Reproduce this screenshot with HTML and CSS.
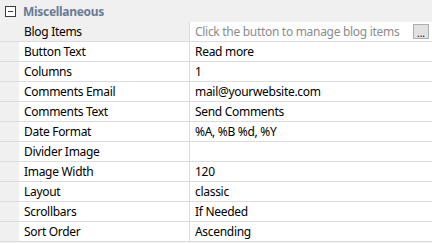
FILE: index.html
```html
<!DOCTYPE html>
<html lang="en">
  <head>
    <meta charset="UTF-8" />
    <meta name="viewport" content="width=device-width, initial-scale=1.0" />
    <title>Property Grid</title>
    <link rel="stylesheet" href="styles.css">
  </head>
  <body>
    <div class="grid">
      <!--Category header-->
      <div class="category">
        <span class="toggle"><span class="minus"></span></span>
        <span class="category-title">Miscellaneous</span>
      </div>

      <div class="row selected">
        <div class="gutter"></div>
        <div class="label">Blog Items</div>
        <div class="value">
          <span class="placeholder">Click the button to manage blog items</span>
          <span class="dots-btn">...</span>
        </div>
      </div>
      <div class="row">
        <div class="gutter"></div>
        <div class="label">Button Text</div>
        <div class="value">Read more</div>
      </div>
      <div class="row">
        <div class="gutter"></div>
        <div class="label">Columns</div>
        <div class="value">1</div>
      </div>
      <div class="row">
        <div class="gutter"></div>
        <div class="label">Comments Email</div>
        <div class="value">mail@yourwebsite.com</div>
      </div>
      <div class="row">
        <div class="gutter"></div>
        <div class="label">Comments Text</div>
        <div class="value">Send Comments</div>
      </div>
      <div class="row">
        <div class="gutter"></div>
        <div class="label">Date Format</div>
        <div class="value">%A, %B %d, %Y</div>
      </div>
      <div class="row">
        <div class="gutter"></div>
        <div class="label">Divider Image</div>
        <div class="value"></div>
      </div>
      <div class="row">
        <div class="gutter"></div>
        <div class="label">Image Width</div>
        <div class="value">120</div>
      </div>
      <div class="row">
        <div class="gutter"></div>
        <div class="label">Layout</div>
        <div class="value">classic</div>
      </div>
      <div class="row">
        <div class="gutter"></div>
        <div class="label">Scrollbars</div>
        <div class="value">If Needed</div>
      </div>
      <div class="row">
        <div class="gutter"></div>
        <div class="label">Sort Order</div>
        <div class="value">Ascending</div>
      </div>
    </div>
  </body>
</html>
```

FILE: styles.css
```css
body {
  margin: 0;
  font-family: "Noto Sans", sans-serif;
  font-size: 12px;
  letter-spacing: -0.3px;
  color: #000;
  background-color: #f0f0f0;
}
.grid {
  width: 432px;
  height: 243px;
  overflow: hidden;
  background-color: #f0f0f0;
}
/* Category header */
.category {
  display: flex;
  align-items: center;
  height: 22px;
}
.toggle {
  display: flex;
  align-items: center;
  justify-content: center;
  box-sizing: border-box;
  width: 11px;
  height: 11px;
  margin-left: 5px;
  border: 1px solid #3c3c3c;
  background-color: #fff;
}
.minus {
  width: 5px;
  height: 1px;
  background-color: #3c3c3c;
}
.category-title {
  margin-left: 7px;
  font-weight: bold;
  color: #687b96;
}
/* Property rows */
.row {
  display: flex;
  height: 20px;
  box-sizing: border-box;
  border-bottom: 1px solid #dcdcdc;
}
.gutter {
  width: 19px;
  flex-shrink: 0;
  background-color: #f0f0f0;
}
.label {
  width: 171px;
  flex-shrink: 0;
  padding-left: 5px;
  box-sizing: border-box;
  border-right: 1px solid #dcdcdc;
  background-color: #fff;
  line-height: 19px;
  white-space: nowrap;
}
.value {
  flex: 1;
  display: flex;
  align-items: center;
  padding-left: 5px;
  background-color: #fff;
  white-space: nowrap;
}
.row.selected .label {
  background-color: #f0f0f0;
}
.placeholder {
  flex: 1;
  color: #8c8c8c;
}
.dots-btn {
  display: flex;
  align-items: flex-end;
  justify-content: center;
  box-sizing: border-box;
  width: 16px;
  height: 15px;
  margin-right: 3px;
  border: 1px solid #adadad;
  background-color: #e1e1e1;
  font-size: 10px;
  line-height: 10px;
  letter-spacing: 0;
}
```
